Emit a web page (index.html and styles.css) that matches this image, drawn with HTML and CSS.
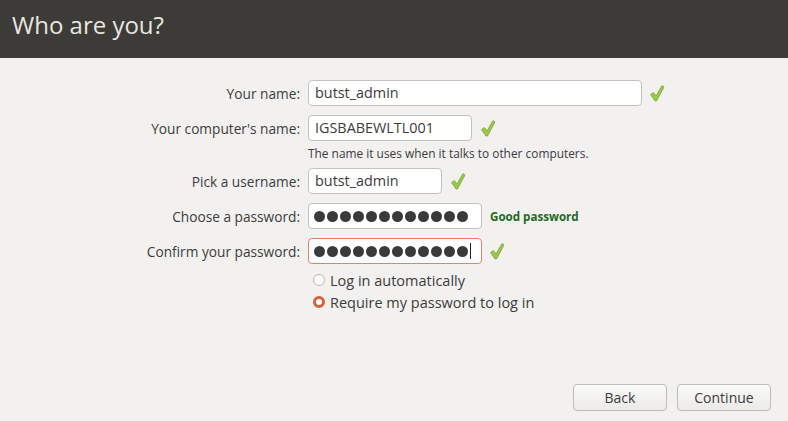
FILE: index.html
```html
<!DOCTYPE html>
<html lang="en">
<head>
  <meta charset="UTF-8">
  <title>Who are you?</title>
  <link rel="stylesheet" href="styles.css">
</head>
<body>
  <div class="header">Who are you?</div>
  <div class="content">
    <div class="form">
      <label>Your name:</label>
      <div class="row">
        <div class="field w-name">butst_admin</div>
        <svg class="check" viewBox="0 0 16 18"><path d="M1.5 10.5 L4.5 8.5 L7 12 L13 1.5 L15 3 L7.5 17 L6 17 Z" fill="#9ac94a" stroke="#7aa632" stroke-width="0.8" stroke-linejoin="round"/></svg>
      </div>

      <label>Your computer's name:</label>
      <div class="row">
        <div class="field w-comp">IGSBABEWLTL001</div>
        <svg class="check" viewBox="0 0 16 18"><path d="M1.5 10.5 L4.5 8.5 L7 12 L13 1.5 L15 3 L7.5 17 L6 17 Z" fill="#9ac94a" stroke="#7aa632" stroke-width="0.8" stroke-linejoin="round"/></svg>
      </div>
      <div></div>
      <div class="hint">The name it uses when it talks to other computers.</div>

      <label>Pick a username:</label>
      <div class="row">
        <div class="field w-user">butst_admin</div>
        <svg class="check" viewBox="0 0 16 18"><path d="M1.5 10.5 L4.5 8.5 L7 12 L13 1.5 L15 3 L7.5 17 L6 17 Z" fill="#9ac94a" stroke="#7aa632" stroke-width="0.8" stroke-linejoin="round"/></svg>
      </div>

      <label>Choose a password:</label>
      <div class="row">
        <div class="field w-pass dots">
          <span></span><span></span><span></span><span></span><span></span><span></span>
          <span></span><span></span><span></span><span></span><span></span><span></span>
        </div>
        <span class="strength">Good password</span>
      </div>

      <label>Confirm your password:</label>
      <div class="row">
        <div class="field w-pass dots focus">
          <span></span><span></span><span></span><span></span><span></span><span></span>
          <span></span><span></span><span></span><span></span><span></span><span></span>
          <i class="caret"></i>
        </div>
        <svg class="check" viewBox="0 0 16 18"><path d="M1.5 10.5 L4.5 8.5 L7 12 L13 1.5 L15 3 L7.5 17 L6 17 Z" fill="#9ac94a" stroke="#7aa632" stroke-width="0.8" stroke-linejoin="round"/></svg>
      </div>

      <div></div>
      <div class="options">
        <div class="radio"><span class="dot"></span>Log in automatically</div>
        <div class="radio"><span class="dot on"></span>Require my password to log in</div>
      </div>
    </div>

    <div class="buttons">
      <button class="btn">Back</button>
      <button class="btn">Continue</button>
    </div>
  </div>
</body>
</html>
```

FILE: styles.css
```css
body {
  margin: 0;
  width: 788px;
  height: 421px;
  overflow: hidden;
  background: #f2f1f0;
  font-family: 'Open Sans', 'Noto Sans', sans-serif;
  color: #3c3c3c;
}
.header {
  height: 58px;
  background: #3c3b37;
  color: #e8e6e1;
  font-size: 24px;
  line-height: 50px;
  padding-left: 12px;
}
.content {
  height: 363px;
  display: flex;
  flex-direction: column;
}
.form {
  display: grid;
  grid-template-columns: 300px auto;
  column-gap: 8px;
  row-gap: 9px;
  padding-top: 22px;
  align-items: center;
}
label {
  text-align: right;
  font-size: 13.7px;
}
.row {display: flex; align-items: center;}
.field {
  box-sizing: border-box;
  height: 26px;
  background: #fff;
  border: 1px solid #c4c2bd;
  border-radius: 4px;
  font-size: 14.4px;
  line-height: 24px;
  padding-left: 6px;
  color: #3c3c3c;
}
.w-name {width: 334px;}
.w-comp {width: 164px;}
.w-user {width: 134px;}
.w-pass {width: 174px;}
.dots {display: flex; align-items: center; gap: 2px; padding-left: 5px;}
.dots span {
  width: 11px;
  height: 11px;
  border-radius: 50%;
  background: #3a3a3a;
}
.focus {border-color: #e2826a;}
.caret {
  width: 1px;
  height: 16px;
  background: #222;
}
.check {width: 16px; height: 18px; margin-left: 8px;}
.w-name + .check {margin-left: 7px;}
.w-pass + .check {margin-left: 7px;}
.strength {
  margin-left: 8px;
  font-size: 11.6px;
  font-weight: 700;
  color: #1d6b1d;
}
.hint {
  font-size: 11.9px;
  margin-top: -3px;
  height: 12px;
  line-height: 12px;
}
.options {margin-top: -4px; padding-left: 5px;}
.radio {
  display: flex;
  align-items: center;
  font-size: 14.5px;
  height: 22px;
}
.dot {
  box-sizing: border-box;
  width: 12px;
  height: 12px;
  border-radius: 50%;
  border: 1px solid #b8b6b0;
  background: #fff;
  margin-right: 5px;
}
.dot.on {
  border: 3.5px solid #d8603a;
  background: #fff;
}
.buttons {
  margin-top: auto;
  margin-bottom: 10px;
  display: flex;
  justify-content: flex-end;
  gap: 10px;
  padding-right: 17px;
}
.btn {
  width: 94px;
  height: 27px;
  border: 1px solid #bfbcb6;
  border-radius: 4px;
  background: linear-gradient(#fafaf9, #ebeae7);
  font-family: inherit;
  font-size: 14px;
  color: #3c3c3c;
}
```
